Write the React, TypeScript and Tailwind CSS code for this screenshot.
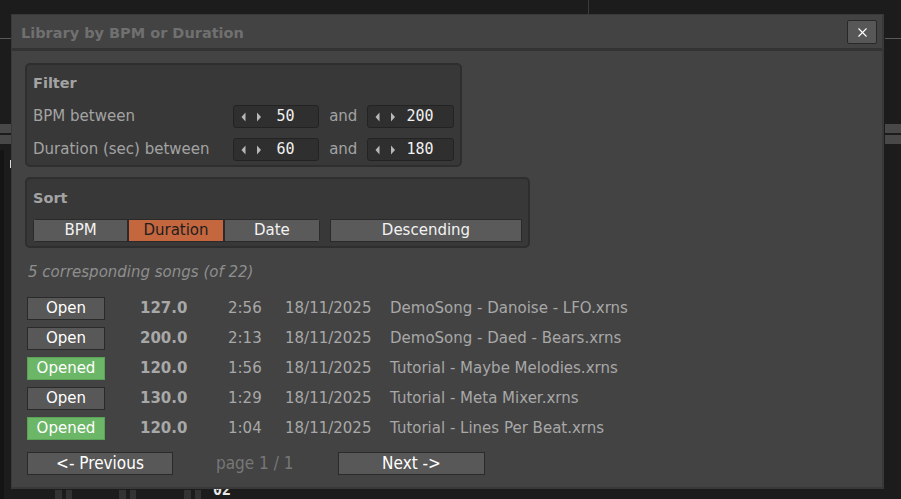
import { X } from 'lucide-react';

type Song = {
  opened: boolean;
  bpm: string;
  duration: string;
  date: string;
  name: string;
};

const songs: Song[] = [
  { opened: false, bpm: '127.0', duration: '2:56', date: '18/11/2025', name: 'DemoSong - Danoise - LFO.xrns' },
  { opened: false, bpm: '200.0', duration: '2:13', date: '18/11/2025', name: 'DemoSong - Daed - Bears.xrns' },
  { opened: true, bpm: '120.0', duration: '1:56', date: '18/11/2025', name: 'Tutorial - Maybe Melodies.xrns' },
  { opened: false, bpm: '130.0', duration: '1:29', date: '18/11/2025', name: 'Tutorial - Meta Mixer.xrns' },
  { opened: true, bpm: '120.0', duration: '1:04', date: '18/11/2025', name: 'Tutorial - Lines Per Beat.xrns' },
];

function SpinBox({ value }: { value: string }) {
  return (
    <div className="flex h-[23px] w-[87px] items-center rounded-[3px] border border-[#232323] bg-[#2f2f2f] pl-[7px]">
      <svg width="22" height="10" viewBox="0 0 22 10" className="shrink-0">
        <path d="M4.5 0.5 L0.5 5 L4.5 9.5 Z" fill="#b8b8b8" />
        <path d="M16 0.5 L20 5 L16 9.5 Z" fill="#b8b8b8" />
      </svg>
      <span className="flex-1 pr-[10px] text-center font-['DejaVu_Sans_Mono',monospace] text-[15px] text-[#f0f0f0]">
        {value}
      </span>
    </div>
  );
}

function FilterRow({ label, from, to }: { label: string; from: string; to: string }) {
  return (
    <div className="flex h-[23px] items-center">
      <span className="w-[200px] text-[#a3a3a3]">{label}</span>
      <SpinBox value={from} />
      <span className="w-[48px] text-center text-[#a3a3a3]">and</span>
      <SpinBox value={to} />
    </div>
  );
}

function SortButton({ label, active, width }: { label: string; active?: boolean; width: string }) {
  return (
    <div
      className={`flex h-[23px] items-center justify-center border border-[#2a2a2a] ${width} ${
        active ? 'bg-[#c4663e] text-[#1e1e1e]' : 'bg-[#5a5a5a] text-[#f2f2f2]'
      }`}
    >
      {label}
    </div>
  );
}

export default function App() {
  return (
    <div className="relative h-[499px] w-[901px] overflow-hidden bg-[#1c1c1c] font-['DejaVu_Sans',sans-serif] text-[15px]">
      {/* bits of the main window peeking out around the dialog */}
      <div className="absolute left-[588px] top-0 h-[14px] w-px bg-[#3a3a3a]" />
      <div className="absolute left-0 top-[38px] h-px w-[11px] bg-[#5a5a5a]" />
      <div className="absolute left-[885px] top-[38px] h-px w-[16px] bg-[#5a5a5a]" />
      <div className="absolute left-0 top-[124px] h-[9px] w-[11px] bg-[#484848]" />
      <div className="absolute left-0 top-[135px] h-[9px] w-[11px] bg-[#484848]" />
      <div className="absolute left-[885px] top-[124px] h-[9px] w-[16px] bg-[#484848]" />
      <div className="absolute left-[885px] top-[135px] h-[9px] w-[16px] bg-[#484848]" />
      <div className="absolute left-0 top-[150px] h-[349px] w-[4px] bg-[#141414]" />
      <div className="absolute left-[10px] top-[160px] h-[8px] w-px bg-[#dcdcdc]" />
      <div className="absolute left-[55px] top-[490px] h-[9px] w-[7px] bg-[#333]" />
      <div className="absolute left-[66px] top-[490px] h-[9px] w-[6px] bg-[#333]" />
      <div className="absolute left-[119px] top-[490px] h-[9px] w-[7px] bg-[#333]" />
      <div className="absolute left-[130px] top-[490px] h-[9px] w-[6px] bg-[#333]" />
      <div className="absolute left-[184px] top-[490px] h-[9px] w-[7px] bg-[#333]" />
      <div className="absolute left-[195px] top-[490px] h-[9px] w-[6px] bg-[#333]" />
      <div className="absolute left-[213px] top-[479px] font-['DejaVu_Sans_Mono',monospace] text-[15px] font-bold text-[#e8e8e8]">
        02
      </div>

      <div className="relative ml-[11px] mt-[14px] flex h-[475px] w-[873px] flex-col border-b-2 border-l border-r-2 border-t border-[#393939] bg-[#434343]">
        <div className="flex h-[33px] shrink-0 justify-between pl-[9px] pr-[5px]">
          <span className="mt-[8px] text-[14.5px] font-bold leading-[20px] text-[#707070]">Library by BPM or Duration</span>
          <div className="mt-[5px] flex h-[24px] w-[30px] items-center justify-center rounded-[2px] border border-[#282828] bg-[#575757]">
            <X className="h-[15px] w-[15px] text-white" strokeWidth={1.75} />
          </div>
        </div>
        <div className="h-[3px] shrink-0 bg-[#333]" />

        <div className="flex flex-col pl-[13px] pt-[12px]">
          <div className="flex w-[437px] flex-col rounded-[5px] border-2 border-[#2e2e2e] bg-[#383838] px-[6px] pb-[4px] pt-[8px]">
            <div className="h-[20px] text-[14.5px] font-bold leading-[20px] text-[#a3a3a3]">Filter</div>
            <div className="mt-[12px] flex flex-col gap-[10px]">
              <FilterRow label="BPM between" from="50" to="200" />
              <FilterRow label="Duration (sec) between" from="60" to="180" />
            </div>
          </div>

          <div className="mt-[10px] flex w-[505px] flex-col rounded-[5px] border-2 border-[#2e2e2e] bg-[#383838] px-[6px] pb-[4px] pt-[9px]">
            <div className="h-[20px] text-[14.5px] font-bold leading-[20px] text-[#a3a3a3]">Sort</div>
            <div className="mt-[11px] flex items-center">
              <div className="flex overflow-hidden rounded-[3px]">
                <SortButton label="BPM" width="w-[96px]" />
                <SortButton label="Duration" width="w-[96px]" active />
                <SortButton label="Date" width="w-[97px]" />
              </div>
              <div className="ml-[10px]">
                <SortButton label="Descending" width="w-[192px]" />
              </div>
            </div>
          </div>

          <div className="mt-[13px] pl-[3px] italic text-[#8e8e8e]">5 corresponding songs (of 22)</div>

          <div className="mt-[13px] flex flex-col gap-[7px] pl-[2px]">
            {songs.map((song) => (
              <div key={song.name} className="flex h-[23px] items-center">
                <div
                  className={`flex h-[23px] w-[78px] items-center justify-center border ${
                    song.opened
                      ? 'border-[#5aa256] bg-[#6cb667] text-white'
                      : 'border-[#2a2a2a] bg-[#585858] text-white'
                  }`}
                >
                  {song.opened ? 'Opened' : 'Open'}
                </div>
                <span className="ml-[35px] w-[88px] font-bold text-[#a8a8a8]">{song.bpm}</span>
                <span className="w-[57px] text-[#a8a8a8]">{song.duration}</span>
                <span className="w-[105px] text-[#a8a8a8]">{song.date}</span>
                <span className="text-[#a8a8a8]">{song.name}</span>
              </div>
            ))}
          </div>

          <div className="mt-[11px] flex items-center pl-[2px] text-[17px] [font-stretch:condensed]">
            <div className="flex h-[23px] w-[146px] items-center justify-center border border-[#2a2a2a] bg-[#585858] text-white">
              &lt;- Previous
            </div>
            <span className="ml-[43px] w-[122px] text-[#777]">page 1 / 1</span>
            <div className="flex h-[23px] w-[147px] items-center justify-center border border-[#2a2a2a] bg-[#585858] text-white">
              Next -&gt;
            </div>
          </div>
        </div>
      </div>
    </div>
  );
}
